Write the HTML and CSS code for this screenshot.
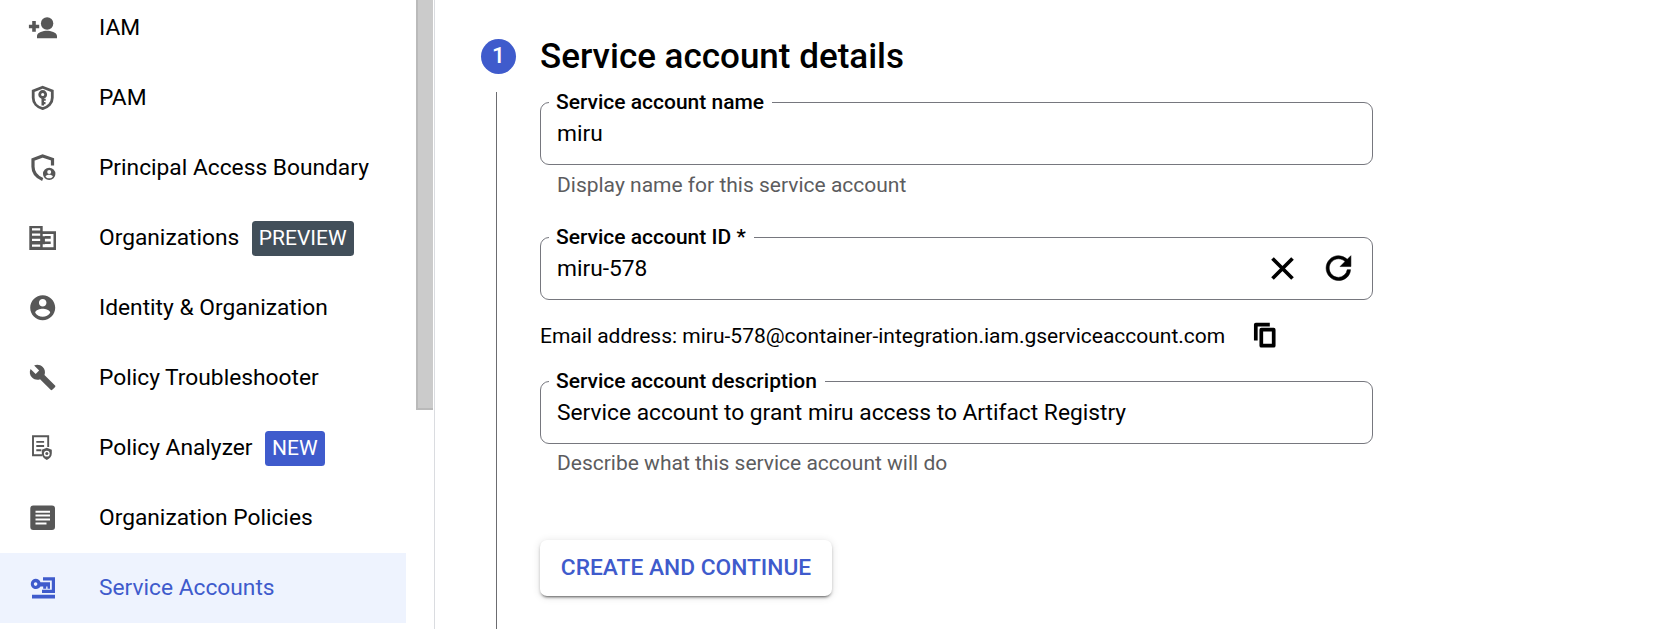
FILE: index.html
```html
<!DOCTYPE html>
<html lang="en">
<head>
<meta charset="utf-8">
<title>Create service account</title>
<link rel="stylesheet" href="styles.css">
</head>
<body>
<div class="app">
  <aside class="sidebar">
    <nav class="nav">
      <a class="nav-item"><svg class="icon" viewBox="0 0 32 32"><circle cx="20.1" cy="11.5" r="6.2"/><path d="M10 26.3v-2.4c0-3.4 6.6-5.1 10-5.1s10 1.700 10 5.100v2.400zM5.200 9h3.600v3.700h3.400v3.500h-3.400v3.500H5.200v-3.500H1.900v-3.500h3.300z"/></svg><span class="label">IAM</span></a>
      <a class="nav-item"><svg class="icon" viewBox="0 0 32 32"><path class="stroke" d="M15.700 5.300 25.300 9v6.700c0 5.300-4 9.600-9.600 10.900-5.600-1.300-9.500-5.600-9.500-10.900V9z"/><circle class="stroke" cx="15.700" cy="12.500" r="3"/><path d="M14.500 15h2.500v1.800h1.700v2H17v1.200h1.500v2.200H17v1.400h-2.500z"/></svg><span class="label">PAM</span></a>
      <a class="nav-item"><svg class="icon" viewBox="0 0 32 32"><path class="stroke wide" d="M25.500 13.500V7.300L15.600 3.900 6 7.500v7.300c0 6 4 10.400 9.700 12.700"/><path fill-rule="evenodd" d="M22.200 15.700a6.200 6.200 0 1 0 0 12.400 6.200 6.200 0 0 0 0-12.400zm0 2.200a2 2 0 1 1 0 4 2 2 0 0 1 0-4zm0 8.400c-1.600 0-2.900-.7-3.700-1.900.2-1.100 2.300-1.600 3.700-1.600s3.500.5 3.700 1.600c-.8 1.200-2.100 1.900-3.700 1.900z"/></svg><span class="label">Principal Access Boundary</span></a>
      <a class="nav-item"><svg class="icon" viewBox="0 0 32 32"><path fill-rule="evenodd" d="M2.300 4h13.400v5.300H29V28H2.300zM5 6.300v2.200h8.200V6.300zm0 5.200v2.200h8.200v-2.200zm0 5.300V19h8.200v-2.200zm0 5.700v2.300h8.200v-2.300zM15.700 12v2.200h2.200v-.1h5.800v2.600h-5.800v2.800h5.800v2.600h-5.800v.1h-2.200v3h10.800V12z"/></svg><span class="label">Organizations</span><span class="badge">PREVIEW</span></a>
      <a class="nav-item"><svg class="icon" viewBox="0 0 32 32"><path transform="translate(.700 .7) scale(1.250)" d="M12 2C6.480 2 2 6.480 2 12s4.480 10 10 10 10-4.480 10-10S17.520 2 12 2zm0 3c1.660 0 3 1.340 3 3s-1.340 3-3 3-3-1.340-3-3 1.340-3 3-3zm0 14.200c-2.500 0-4.710-1.280-6-3.220.03-1.990 4-3.080 6-3.080 1.990 0 5.970 1.090 6 3.080-1.290 1.940-3.500 3.220-6 3.220z"/></svg><span class="label">Identity &amp; Organization</span></a>
      <a class="nav-item"><svg class="icon" viewBox="0 0 32 32"><path transform="translate(1.700 1.500) scale(1.160)" d="M22.700 19l-9.100-9.100c.9-2.300.4-5-1.500-6.900-2-2-5-2.400-7.400-1.300L9 6 6 9 1.600 4.700C.4 7.100.9 10.100 2.900 12.100c1.900 1.900 4.600 2.400 6.900 1.500l9.100 9.100c.4.4 1 .4 1.400 0l2.300-2.300c.5-.4.5-1.100.1-1.400z"/></svg><span class="label">Policy Troubleshooter</span></a>
      <a class="nav-item"><svg class="icon" viewBox="0 0 32 32"><path class="stroke thin" d="M15 23.300H6V4.300h15.200V15M9.300 9.900h7.800M9.300 14h7.800M9.300 18.300h5"/><path fill-rule="evenodd" d="M19.800 15.800l5 2v3.500c0 3.200-2 5.500-5 6.700-3-1.200-5-3.500-5-6.700v-3.500zm0 3a2.900 2.900 0 1 0 0 5.800 2.900 2.900 0 0 0 0-5.800z"/><circle cx="19.800" cy="21.600" r="1.500"/></svg><span class="label">Policy Analyzer</span><span class="badge new">NEW</span></a>
      <a class="nav-item"><svg class="icon" viewBox="0 0 32 32"><path fill-rule="evenodd" d="M6.300 3.500h18.700a3 3 0 0 1 3 3v18.500a3 3 0 0 1-3 3H6.300a3 3 0 0 1-3-3V6.500a3 3 0 0 1 3-3zM8.500 8.700v2h14.500v-2zm0 3.900v2h14.500v-2zm0 3.900v2h14.500v-2zm0 3.900v2h11v-2z"/></svg><span class="label">Organization Policies</span></a>
      <a class="nav-item active"><svg class="icon" viewBox="0 0 32 32"><path fill-rule="evenodd" d="M8.600 6.700a5.200 5.200 0 0 1 4.900 3.600H23v6.400h-2.500v-2.200h-1.300v2.200h-3v-2.200h-2.700A5.200 5.200 0 1 1 8.600 6.700zm0 3.600a1.800 1.800 0 1 0 0 3.600 1.800 1.800 0 0 0 0-3.600z"/><path d="M16 5.200h12v15.900H15v-3.300h9.800V8.400H16zM5 22.800h23v3.700H5z"/></svg><span class="label">Service Accounts</span></a>
    </nav>
    <div class="scrollbar"></div>
  </aside>
  <main class="content">
    <div class="rail"><span class="step">1</span><span class="line"></span></div>
    <form class="form">
      <h1 class="title">Service account details</h1>
      <fieldset class="field"><legend>Service account name</legend><span class="value">miru</span></fieldset>
      <p class="hint">Display name for this service account</p>
      <fieldset class="field id-field"><legend>Service account ID *</legend><span class="value">miru-578</span>
        <span class="actions">
          <svg class="icon" viewBox="0 0 32 32"><path class="stroke x" d="M6.500 6.500 26.500 26.500M26.500 6.500 6.500 26.500"/></svg>
          <svg class="icon" viewBox="0 0 32 32"><path class="reload" transform="translate(-2.100 -2.500) scale(1.550)" d="M17.650 6.350A7.958 7.958 0 0 0 12 4c-4.420 0-7.990 3.580-7.990 8s3.570 8 7.990 8c3.730 0 7.550-2.550 7.730-7h-2.080A5.990 5.990 0 0 1 12 18c-3.310 0-6-2.690-6-6s2.690-6 6-6c1.660 0 3.140.69 4.220 1.780L13 11h7V4l-2.350 2.350z"/></svg>
        </span></fieldset>
      <div class="email"><span>Email address: miru-578@container-integration.iam.gserviceaccount.com</span><svg class="icon" viewBox="0 0 32 32"><path class="stroke copy" stroke-linejoin="round" d="M5.800 21.500V5.600h14M11.300 10.700h12.400v16H11.300z"/></svg></div>
      <fieldset class="field desc-field"><legend>Service account description</legend><span class="value">Service account to grant miru access to Artifact Registry</span></fieldset>
      <p class="hint desc-hint">Describe what this service account will do</p>
      <button class="create" type="button">CREATE AND CONTINUE</button>
    </form>
  </main>
</div>
</body>
</html>
```

FILE: styles.css
```css
* { box-sizing: border-box; }
body {
  margin: 0;
  background: #fff;
  color: #000;
  font-family: Roboto, "Liberation Sans", sans-serif;
  font-size: 22.75px;
  overflow: hidden;
}
.app { display: flex; height: 629px; overflow: hidden; }
.sidebar {
  display: flex;
  justify-content: space-between;
  width: 435px;
  flex: none;
  border-right: 1px solid #dadce0;
}
.nav { width: 406px; margin-top: -7px; }
.nav-item {
  display: flex;
  align-items: center;
  height: 70px;
  padding-left: 27px;
  white-space: nowrap;
}
.label { padding-bottom: 2px; }
.icon { width: 32px; height: 32px; flex: none; fill: #575757; }
.nav-item .icon { margin: 0 40px 1px 0; }
.stroke { fill: none; stroke: #575757; stroke-width: 2.8; }
.wide { stroke-width: 3.2; }
.thin { stroke-width: 1.9; }
.active { background: #eef3fe; color: #3f5bcc; }
.active .icon { fill: #3f5bcc; }
.badge {
  height: 35px;
  margin-left: 12.5px;
  padding: 0 7px;
  border-radius: 3.5px;
  background: #424f5a;
  color: #fff;
  font-size: 21px;
  line-height: 34px;
}
.new { background: #3f5bcc; }
.scrollbar {
  width: 17px;
  height: 410px;
  margin-right: 1px;
  border-left: 2px solid #bababa;
  border-bottom: 2px solid #bababa;
  background: #cbcbcb;
}
.content { display: flex; padding: 39px 0 0 46px; flex: 1; }
.rail { display: flex; flex-direction: column; width: 59px; flex: none; }
.step {
  width: 35px;
  height: 35px;
  border-radius: 50%;
  background: #3f5bcc;
  color: #fff;
  font-size: 22.75px;
  font-weight: 500;
  line-height: 34px;
  text-align: center;
}
.line { flex: 1; width: 1px; margin: 18px 0 0 15px; background: #6c6c70; }
.form { display: flex; flex-direction: column; width: 833px; }
.title { margin: 0; font-size: 35px; font-weight: 500; line-height: 35px; }
.field {
  display: flex;
  justify-content: space-between;
  width: 833px;
  height: 75px;
  margin: 16px 0 0;
  padding: 0 18px 0 16px;
  border: 1px solid #76777e;
  border-radius: 9px;
}
.field legend {
  margin-left: -8px;
  padding: 0 8px 0 7px;
  font-size: 21px;
  font-weight: 500;
  line-height: 24px;
}
.value { line-height: 40px; }
.hint { margin: 8px 0 0 17px; color: #5c5c5e; font-size: 21px; line-height: 25px; }
.id-field { margin-top: 27px; }
.actions { display: flex; gap: 24px; margin-top: 3px; }
.actions .icon, .email .icon { fill: #000; }
.reload { stroke: #000; stroke-width: .35; }
.x, .copy { stroke: #000; stroke-width: 3.7; }
.email { display: flex; align-items: center; gap: 25px; height: 32px; margin-top: 19px; font-size: 21px; }
.email span { padding-top: 2px; }
.desc-field { margin-top: 18px; }
.desc-hint { margin-top: 7px; }
.create {
  width: 292px;
  height: 56px;
  margin-top: 64px;
  padding: 0 0 2px;
  border: 0;
  border-radius: 7px;
  background: #fff;
  color: #3f5bcc;
  font: 500 22.75px Roboto, "Liberation Sans", sans-serif;
  box-shadow: 0 3px 2px -2px rgba(0,0,0,.4), 0 2px 3px rgba(0,0,0,.2), 0 1px 9px rgba(0,0,0,.12);
}
```
